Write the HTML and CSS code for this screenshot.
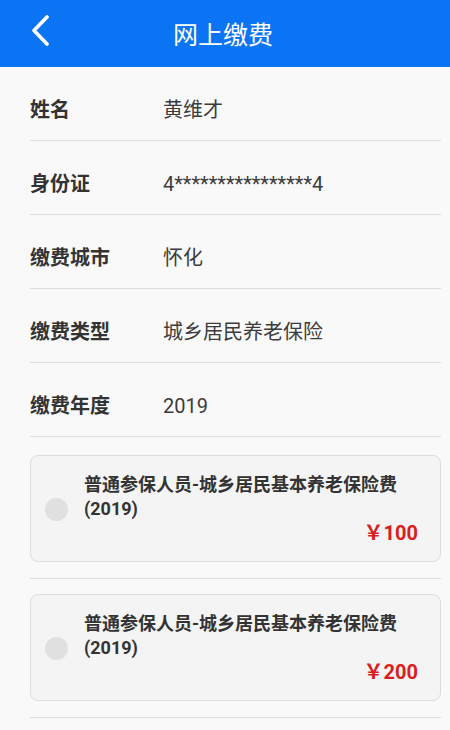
FILE: index.html
```html
<!DOCTYPE html>
<html lang="zh-CN">
<head>
<meta charset="utf-8">
<title>网上缴费</title>
<link rel="stylesheet" href="styles.css">
</head>
<body>
<header class="topbar">
  <svg class="back" width="20" height="32" viewBox="0 0 20 32"><path d="M16 2 L3 15.5 L16 29" fill="none" stroke="#fff" stroke-width="3.6" stroke-linecap="round" stroke-linejoin="round"/></svg>
  <h1 class="title">网上缴费</h1>
</header>
<main class="content">
  <div class="row"><span class="label">姓名</span><span class="value">黄维才</span></div>
  <div class="row"><span class="label">身份证</span><span class="value">4****************4</span></div>
  <div class="row"><span class="label">缴费城市</span><span class="value">怀化</span></div>
  <div class="row"><span class="label">缴费类型</span><span class="value">城乡居民养老保险</span></div>
  <div class="row"><span class="label">缴费年度</span><span class="value">2019</span></div>
  <div class="item first">
    <div class="card">
      <span class="radio"></span>
      <div class="info">
        <div class="name">普通参保人员-城乡居民基本养老保险费<br>(2019)</div>
        <div class="price">￥100</div>
      </div>
    </div>
  </div>
  <div class="item">
    <div class="card">
      <span class="radio"></span>
      <div class="info">
        <div class="name">普通参保人员-城乡居民基本养老保险费<br>(2019)</div>
        <div class="price">￥200</div>
      </div>
    </div>
  </div>
</main>
</body>
</html>
```
FILE: styles.css
```css
* { box-sizing: border-box; }
html, body { margin: 0; padding: 0; }
body {
  background: #f9f9f9;
  font-family: Roboto, "Noto Sans CJK SC", sans-serif;
  color: #333;
  width: 450px;
  height: 730px;
  overflow: hidden;
}
.topbar {
  height: 67px;
  background: #0b74f4;
  display: flex;
  align-items: center;
  justify-content: center;
  position: relative;
}
.back {
  position: absolute;
  left: 31px;
  top: 15px;
}
.title {
  margin: 0 4px 2px 0;
  font-size: 25px;
  font-weight: 400;
  color: #fff;
}
.content {
  padding: 0 9px 0 30px;
}
.row {
  display: flex;
  align-items: center;
  padding: 30px 0 17px;
  border-bottom: 1.5px solid #dedede;
  line-height: 26px;
  height: 74px;
}
.label {
  width: 133px;
  font-size: 20px;
  font-weight: 700;
  color: #333;
}
.value {
  font-size: 20px;
  color: #3c3c3c;
}
.item {
  padding: 15px 0 16px;
  border-bottom: 1.5px solid #dedede;
}
.item.first {
  padding-top: 18px;
}
.card {
  background: #f4f4f4;
  border: 1px solid #dddddd;
  border-radius: 8px;
  height: 107px;
  display: flex;
  align-items: center;
  padding: 0 22px 0 14px;
}
.radio {
  width: 23px;
  height: 23px;
  border-radius: 50%;
  background: #e0e0e0;
  flex: none;
  margin-top: 2px;
}
.info {
  flex: 1;
  margin-left: 16px;
  padding-top: 1px;
}
.name {
  font-size: 18px;
  font-weight: 700;
  line-height: 24px;
  color: #333;
}
.price {
  text-align: right;
  font-size: 20px;
  font-weight: 700;
  color: #d81e1e;
  line-height: 24px;
}
```
